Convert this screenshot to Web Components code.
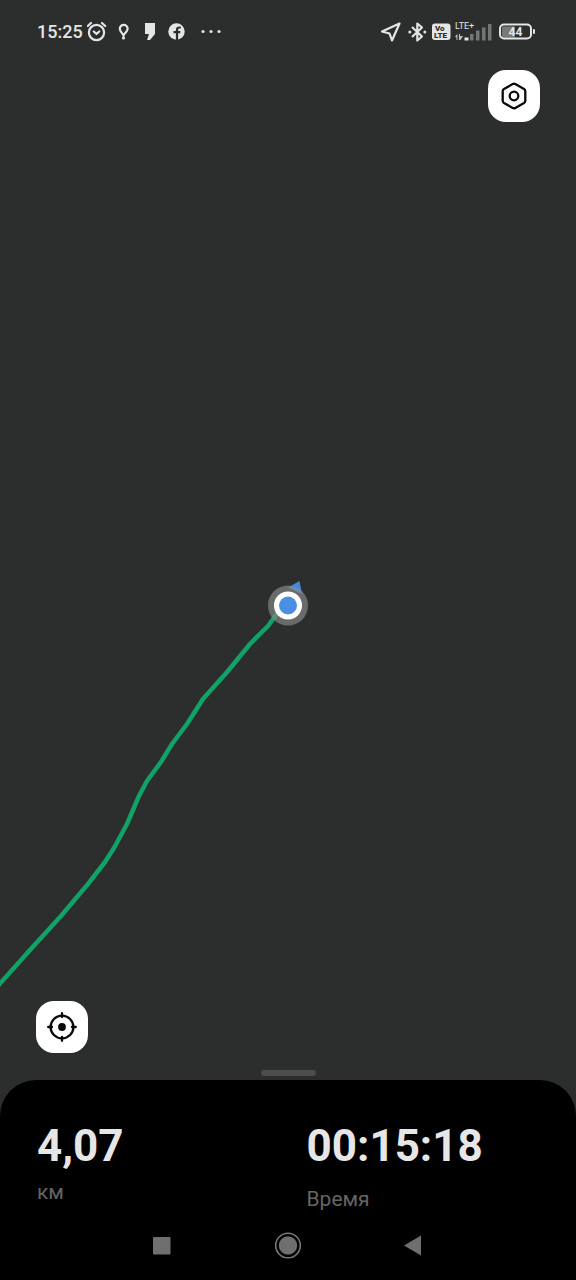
<!DOCTYPE html>
<html lang="ru">
<head>
<meta charset="utf-8">
<meta name="viewport" content="width=device-width, initial-scale=1">
<title>Тренировка</title>
<style>
  body { margin: 0; background: #000; font-family: Roboto, "Noto Sans", sans-serif; }
</style>
</head>
<body>
<workout-screen></workout-screen>

<template id="workout-screen">
  <style>
    :host { display: flex; flex-direction: column; position: relative; min-height: 100vh; background: #2c2e2e; overflow: hidden; }
    route-map { position: absolute; inset: 0; }
    status-bar, main, metrics-sheet { position: relative; }
    main { flex: 1; display: flex; flex-direction: column; justify-content: space-between; padding: 6px 36px 4px; }
    .top { display: flex; justify-content: flex-end; }
    .bottom { display: flex; flex-direction: column; gap: 17px; }
    .handle { align-self: center; width: 55px; height: 6px; padding: 0; border: 0; border-radius: 3px; background: #4c4e4e; }
  </style>
  <route-map></route-map>
  <status-bar></status-bar>
  <main>
    <div class="top">
      <map-button label="Настройки">
        <svg width="32" height="32" viewBox="0 0 32 32" fill="none" stroke="#0a0a0a" stroke-width="2.3" stroke-linejoin="round">
          <path d="M14.7 4.1Q16 3.4 17.3 4.1L26 9Q27.3 9.8 27.3 11.2V20.8Q27.3 22.2 26 23L17.3 27.9Q16 28.6 14.7 27.9L6 23Q4.7 22.2 4.7 20.8V11.2Q4.700 9.800 6 9Z"/>
          <circle cx="16" cy="16" r="4.3"/>
        </svg>
      </map-button>
    </div>
    <div class="bottom">
      <map-button label="Моё местоположение">
        <svg width="32" height="32" viewBox="0 0 32 32" fill="none" stroke="#0a0a0a" stroke-width="2.3" stroke-linecap="round">
          <circle cx="16" cy="16" r="11.4"/>
          <path d="M16 2.200V6M16 26V29.800M2.200 16H6M26 16H29.800"/>
          <circle cx="16" cy="16" r="3.9" fill="#0a0a0a" stroke="none"/>
        </svg>
      </map-button>
      <button class="handle" aria-label="Развернуть панель"></button>
    </div>
  </main>
  <metrics-sheet>
    <metric-item value="4,07" unit="км"></metric-item>
    <metric-item value="00:15:18" unit="Время" spaced></metric-item>
  </metrics-sheet>
</template>

<template id="route-map">
  <style>
    :host { display: block; }
    svg { display: block; width: 100%; height: 100%; }
  </style>
  <svg viewBox="0 0 576 1280" preserveAspectRatio="xMidYMid slice" role="img" aria-label="Маршрут">
    <path d="M-4 988L0 983.5L30 950L61 916L88 884L105 862L114 848L127 824L139 796L147 781L161 762L172 744L187 724L203 699L228 671L250 644L268 626L281 608" fill="none" stroke="#10a266" stroke-width="4.5" stroke-linejoin="round"/>
    <path d="M299.500 581L288 587.500L302 594Z" fill="#4187dc"/>
    <circle cx="288" cy="605.5" r="20" fill="#8b8b8b" fill-opacity=".65"/>
    <circle cx="288" cy="605.5" r="14" fill="#fff"/>
    <circle cx="288" cy="605.5" r="9" fill="#4a8fe2"/>
  </svg>
</template>

<template id="status-bar">
  <style>
    :host { display: flex; justify-content: space-between; align-items: center; height: 64px; padding: 0 40px 0 37px; color: #e4e5e5; }
    div { display: flex; align-items: center; gap: 4px; }
    time { font-size: 18px; line-height: 24px; font-weight: 500; }
    svg { display: block; font-family: Roboto, sans-serif; }
  </style>
  <div>
    <time>15:25</time>
    <svg width="22" height="22" viewBox="0 0 22 22" fill="none" stroke="currentColor" stroke-width="2.2" stroke-linecap="round" stroke-linejoin="round">
      <circle cx="9.5" cy="11.5" r="7.6"/><path d="M.8 5L4 2M18.200 5L15 2M6.800 10.500L9.500 13L12.200 10.500"/>
    </svg>
    <svg width="22" height="22" viewBox="0 0 22 22" fill="none" stroke="currentColor" stroke-width="2.2">
      <path d="M10.500 14.500C9.500 12 6.800 10.600 6.800 7.800A3.900 3.900 0 0 1 14.600 7.800C14.600 10.600 11.500 12 10.500 14.500Z"/><circle cx="10.5" cy="17" r="1.6" fill="currentColor" stroke="none"/>
    </svg>
    <svg width="22" height="22" viewBox="0 0 22 22" fill="currentColor">
      <path d="M6 2H16V13L11 19H8L10 13H6Z"/>
    </svg>
    <svg width="22" height="22" viewBox="0 0 22 22">
      <circle cx="11.5" cy="10.5" r="8.2" fill="currentColor"/>
      <path d="M15.800 6.500H14.300Q12 6.500 12 8.800V19M8.500 11.200H15.300" fill="none" stroke="#2c2e2e" stroke-width="2.2"/>
    </svg>
    <svg width="36" height="22" viewBox="0 0 36 22" fill="currentColor">
      <circle cx="12" cy="10.5" r="1.6"/><circle cx="20" cy="10.5" r="1.6"/><circle cx="28" cy="10.5" r="1.6"/>
    </svg>
  </div>
  <div>
    <svg width="22" height="22" viewBox="0 0 22 22" fill="none" stroke="currentColor" stroke-width="2.2" stroke-linejoin="round">
      <path d="M20.500 2.500L3 10.500L10.500 12.500L13 19.500Z"/>
    </svg>
    <svg width="22" height="22" viewBox="0 0 22 22" fill="none" stroke="currentColor" stroke-width="2.2" stroke-linejoin="round">
      <path d="M7 6L17 15.500L12.300 19.500V2.500L17 6.500L7 16"/><circle cx="4.8" cy="11" r="1.5" fill="currentColor" stroke="none"/><circle cx="19.8" cy="11" r="1.5" fill="currentColor" stroke="none"/>
    </svg>
    <svg width="20" height="22" viewBox="0 0 20 22">
      <rect x="1" y="2.5" width="18.5" height="16.5" rx="3" fill="currentColor"/>
      <g fill="#2c2e2e" font-size="8" font-weight="900"><text x="4" y="10">Vo</text><text x="3" y="17">LTE</text></g>
    </svg>
    <svg width="40" height="22" viewBox="0 0 40 22" fill="currentColor">
      <text x="0" y="8" font-size="9">LTE+</text>
      <path d="M0 15.500L2.500 13V19H1.500V16.500ZM4 13H5V15H8L5.500 19H4Z" opacity=".8"/>
      <rect x="9.5" y="16.5" width="4" height="3"/>
      <g fill="#747676"><rect x="15" y="13" width="3.5" height="6.5"/><rect x="21" y="9.500" width="3.5" height="10"/><rect x="27" y="6.500" width="3.5" height="13"/><rect x="33" y="3" width="3.5" height="16.5"/></g>
    </svg>
    <svg width="37" height="22" viewBox="0 0 37 22">
      <rect x="3" y="5.500" width="13" height="11" rx="1" fill="#777979"/>
      <rect x="1" y="3.500" width="31" height="14" rx="4" fill="none" stroke="currentColor" stroke-width="2"/>
      <rect x="34" y="8" width="2" height="5" rx="1" fill="currentColor"/>
      <text x="16.5" y="15" text-anchor="middle" font-size="12" font-weight="700" fill="currentColor">44</text>
    </svg>
  </div>
</template>

<template id="map-button">
  <style>
    :host { display: block; width: 52px; height: 52px; }
    button { display: grid; place-items: center; width: 100%; height: 100%; padding: 0; border: 0; border-radius: 18px; background: #fff; }
  </style>
  <button><slot></slot></button>
</template>

<template id="metrics-sheet">
  <style>
    :host { display: block; background: #000; border-radius: 36px 36px 0 0; }
    section { display: grid; grid-template-columns: 1fr 1fr; padding: 40px 0 0 37px; }
    nav { display: flex; justify-content: center; height: 69px; }
    nav button { display: grid; place-items: center; width: 126px; padding: 0; border: 0; background: none; }
  </style>
  <section><slot></slot></section>
  <nav>
    <button aria-label="Недавние"><svg width="28" height="28" viewBox="0 0 28 28"><rect x="5" y="5" width="17.5" height="17.5" rx="1" fill="#6f6f6f"/></svg></button>
    <button aria-label="Домой"><svg width="28" height="28" viewBox="0 0 28 28"><circle cx="14" cy="13.5" r="12.3" fill="none" stroke="#777" stroke-width="1.6"/><circle cx="14" cy="13.5" r="9.2" fill="#6f6f6f"/></svg></button>
    <button aria-label="Назад"><svg width="28" height="28" viewBox="0 0 28 28"><path d="M4 13.500L21 3.500V23.500Z" fill="#6f6f6f"/></svg></button>
  </nav>
</template>

<template id="metric-item">
  <style>
    :host { display: flex; flex-direction: column; gap: 8px; }
    :host([spaced]) { gap: 15px; }
    .value { font-size: 44px; line-height: 52px; font-weight: 700; color: #e6e6e6; }
    .unit { font-size: 21px; line-height: 24px; color: #656565; }
  </style>
  <span class="value"></span>
  <span class="unit"></span>
</template>

<script>
  class TemplateElement extends HTMLElement {
    constructor() {
      super();
      const template = document.getElementById(this.localName);
      this.attachShadow({ mode: "open" }).append(template.content.cloneNode(true));
    }
  }

  customElements.define("route-map", class extends TemplateElement {});
  customElements.define("status-bar", class extends TemplateElement {});
  customElements.define("metrics-sheet", class extends TemplateElement {});

  customElements.define("map-button", class extends TemplateElement {
    connectedCallback() {
      this.shadowRoot.querySelector("button").setAttribute("aria-label", this.getAttribute("label"));
    }
  });

  customElements.define("metric-item", class extends TemplateElement {
    connectedCallback() {
      this.shadowRoot.querySelector(".value").textContent = this.getAttribute("value");
      this.shadowRoot.querySelector(".unit").textContent = this.getAttribute("unit");
    }
  });

  customElements.define("workout-screen", class extends TemplateElement {});
</script>
</body>
</html>
